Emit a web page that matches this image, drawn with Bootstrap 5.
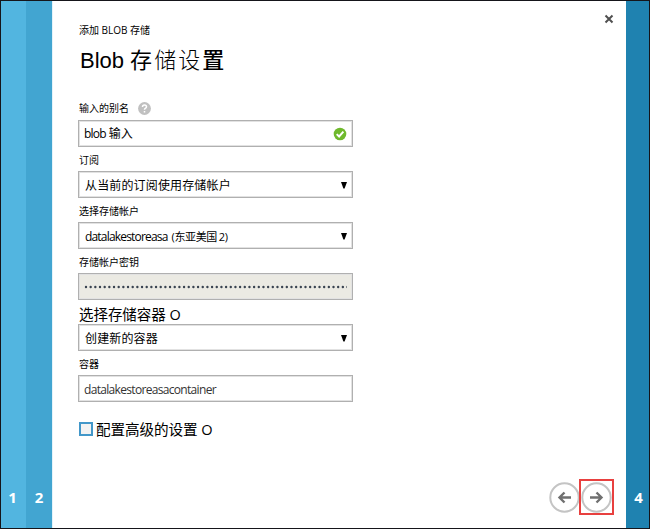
<!DOCTYPE html>
<html lang="zh-CN">
<head>
<meta charset="utf-8">
<title>Blob 存储设置</title>
<link href="https://cdn.jsdelivr.net/npm/bootstrap@5.3.0/dist/css/bootstrap.min.css" rel="stylesheet">
<style>
body{font-family:"Open Sans","Noto Sans CJK SC",sans-serif;color:#000;line-height:1;font-size:12px}
.wizard{width:650px;height:529px;border:1px solid #15151a}
.step{color:#fff;font-weight:700;font-size:15px;padding-bottom:23px;line-height:15px}
.s1{width:25px;background:#52b5e0;padding-right:2px}
.s2{width:26px;background:#42a5d1}
.s4{width:23px;background:#1f82b0;padding-left:2px}
.pane{padding:0 12px 0 25px;border-left:1px solid #e4f3fa}
.crumb{font-size:10px;height:12px;line-height:12px;margin:23px 0 0 1px;white-space:nowrap}
.title{font-family:"Liberation Sans","Noto Sans CJK SC",sans-serif;font-size:22px;line-height:28px;height:28px;margin:11px 0 0 2px;white-space:nowrap;font-weight:400}
.title .cjk{letter-spacing:2.1px;margin-left:6px}
.title .thin{font-weight:300}
.title .thick{font-weight:500}
.form-area{width:275px;margin-top:21px}
.cap{height:24px;font-size:10px;line-height:12px;padding:6px 0 6px 1px;white-space:nowrap}
.cap.low{padding-top:7px;padding-bottom:5px}
.cap.big{font-size:14.5px;line-height:16px;padding:7px 0 1px 1px;letter-spacing:-.05px}
.box{height:27px;border:1px solid #b0b0b0;box-shadow:inset 0 0 0 1px #e2e2e2;padding:0 5px;white-space:nowrap;font-size:12px;line-height:25px}
.box.key{background:#ebeae3}
.box.pick{padding-top:1px}
.cn{letter-spacing:.15px;margin-left:1px}
.tight{letter-spacing:-.82px}
.region{letter-spacing:-.35px;margin-left:4px;font-size:11px}
.region .gap-fix{letter-spacing:-1px}
.entry{letter-spacing:-.68px;color:#333}
.tick{width:14px;height:14px}
.tri{width:6px;height:7px}
.check{width:14px;height:14px;border:2px solid #4297c9;background:#f2f2f2}
.adv{margin:19px 0 0 1px;font-size:14.6px;line-height:16px;gap:3px;white-space:nowrap;letter-spacing:-.1px}
.help{margin-left:9px}
.x{margin-top:13px;width:10px;height:10px}
.nav-btns{margin-bottom:13px}
.ring{width:31px;height:31px;margin-right:-1px}
.hot{width:35px;height:36px;border:2px solid #e8403f}
</style>
</head>
<body class="m-0 overflow-hidden">
<div class="wizard d-flex">
  <div class="step s1 d-flex align-items-end justify-content-center">1</div>
  <div class="step s2 d-flex align-items-end justify-content-center">2</div>
  <main class="pane bg-white flex-grow-1 d-flex justify-content-between">
    <div>
      <div class="crumb">添加 BLOB 存储</div>
      <h1 class="title">Blob<span class="cjk">存<span class="thin">储设</span><span class="thick">置</span></span></h1>
      <div class="form-area">
        <div class="cap d-flex align-items-center"><span>输入的别名</span>
          <svg class="help" width="13" height="13" viewBox="0 0 13 13"><circle cx="6.5" cy="6.5" r="6.4" fill="#c0c0c0"/><path d="M4.5 5Q4.5 3 6.5 3T8.5 4.8Q8.5 5.8 7.3 6.4Q6.5 6.8 6.5 7.8M6.5 9V10.4" fill="none" stroke="#fff" stroke-width="1.5"/></svg></div>
        <div class="box d-flex align-items-center justify-content-between"><span><span class="tight">blob</span> 输入</span>
          <svg class="tick" viewBox="0 0 14 14"><circle cx="7" cy="7" r="6.3" fill="#6fb92c"/><path d="M3.7 7.1L6.1 9.5L10.4 4.6" fill="none" stroke="#fff" stroke-width="1.9"/></svg></div>
        <div class="cap low">订阅</div>
        <div class="box pick d-flex align-items-center justify-content-between"><span class="cn">从当前的订阅使用存储帐户</span><svg class="tri" viewBox="0 0 6 7"><path d="M0 0H6L3.6 6.5H2.4Z"/></svg></div>
        <div class="cap low">选择存储帐户</div>
        <div class="box pick d-flex align-items-center justify-content-between"><span class="cn"><span class="tight">datalakestoreasa</span><span class="region">(东亚美国<span class="gap-fix"> </span>2)</span></span><svg class="tri" viewBox="0 0 6 7"><path d="M0 0H6L3.6 6.5H2.4Z"/></svg></div>
        <div class="cap low">存储帐户密钥</div>
        <div class="box key d-flex align-items-center"><svg width="265" height="4"><path d="M2 2H264" stroke="#394350" stroke-width="2.4" stroke-linecap="round" stroke-dasharray="0 4.67"/></svg></div>
        <div class="cap big">选择存储容器 O</div>
        <div class="box pick d-flex align-items-center justify-content-between"><span class="cn">创建新的容器</span><svg class="tri" viewBox="0 0 6 7"><path d="M0 0H6L3.6 6.5H2.4Z"/></svg></div>
        <div class="cap low">容器</div>
        <div class="box pick"><span class="entry">datalakestoreasacontainer</span></div>
        <div class="adv d-flex align-items-center"><span class="check"></span><span>配置高级的设置 O</span></div>
      </div>
    </div>
    <div class="d-flex flex-column justify-content-between align-items-end">
      <svg class="x" viewBox="0 0 10 10"><path d="M1.5 1.5L8.5 8.5M8.5 1.5L1.5 8.5" stroke="#505050" stroke-width="2"/></svg>
      <div class="nav-btns d-flex align-items-center">
        <svg class="ring" viewBox="0 0 31 31"><circle cx="15.5" cy="15.5" r="14.2" fill="none" stroke="#c4c4c4" stroke-width="2"/><path d="M22 15.5H11M15.5 10.5L10.5 15.5L15.5 20.5" fill="none" stroke="#707070" stroke-width="2.4"/></svg>
        <div class="hot d-flex align-items-center justify-content-center"><svg width="31" height="31" viewBox="0 0 31 31"><circle cx="15.5" cy="15.5" r="14.2" fill="none" stroke="#c4c4c4" stroke-width="2"/><path d="M9 15.5H20M15.5 10.5L20.5 15.5L15.5 20.5" fill="none" stroke="#707070" stroke-width="2.4"/></svg></div>
      </div>
    </div>
  </main>
  <div class="step s4 d-flex align-items-end justify-content-center">4</div>
</div>
<script src="https://cdn.jsdelivr.net/npm/bootstrap@5.3.0/dist/js/bootstrap.bundle.min.js"></script>
</body>
</html>
